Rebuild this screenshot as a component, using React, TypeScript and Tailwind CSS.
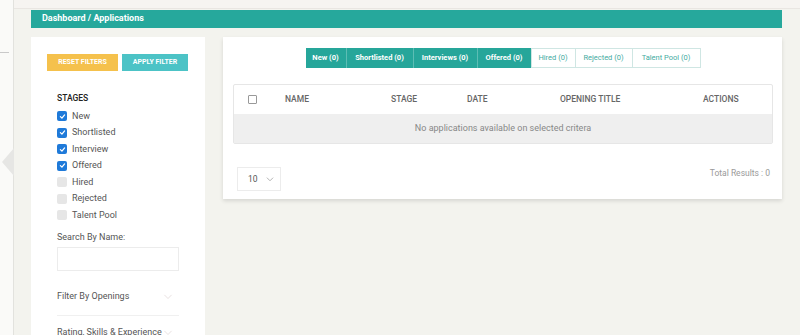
import React from 'react';

const stages = [
  { label: 'New', checked: true },
  { label: 'Shortlisted', checked: true },
  { label: 'Interview', checked: true },
  { label: 'Offered', checked: true },
  { label: 'Hired', checked: false },
  { label: 'Rejected', checked: false },
  { label: 'Talent Pool', checked: false },
];

const tabs = [
  { label: 'New (0)', active: true, w: 'w-[41px]' },
  { label: 'Shortlisted (0)', active: true, w: 'w-[67px]' },
  { label: 'Interviews (0)', active: true, w: 'w-[64px]' },
  { label: 'Offered (0)', active: true, w: 'w-[54px]' },
  { label: 'Hired (0)', active: false, w: 'w-[45px]' },
  { label: 'Rejected (0)', active: false, w: 'w-[58px]' },
  { label: 'Talent Pool (0)', active: false, w: 'w-[69px]' },
];

const Chevron = ({ className }: { className?: string }) => (
  <svg className={className} viewBox="0 0 12 8" fill="none" stroke="currentColor" strokeWidth={1.2}>
    <path d="M1.5 1.5 6 6l4.5-4.5" strokeLinecap="round" strokeLinejoin="round" />
  </svg>
);

const CheckBox = ({ checked }: { checked: boolean }) =>
  checked ? (
    <span className="flex h-[10px] w-[10px] items-center justify-center rounded-[2px] bg-[#1f7ad9]">
      <svg className="h-[7px] w-[7px]" viewBox="0 0 10 10" fill="none" stroke="white" strokeWidth={1.8}>
        <path d="M2 5.2 4.2 7.3 8 2.8" strokeLinecap="round" strokeLinejoin="round" />
      </svg>
    </span>
  ) : (
    <span className="h-[10px] w-[10px] rounded-[2px] bg-[#e6e6e6]" />
  );

const FilterPanel = () => (
  <div className="w-[174px] shrink-0 self-stretch bg-white pt-[17px]">
    <div className="flex gap-[4px] pl-4">
      <button className="h-[17px] w-[71px] bg-[#f5c14c] text-[7px] font-bold uppercase text-white">
        Reset Filters
      </button>
      <button className="h-[17px] w-[66px] bg-[#4cc3c6] text-[7px] font-bold uppercase text-white">
        Apply Filter
      </button>
    </div>

    <div className="pl-[26px] pr-[26px] pt-[21px]">
      <div className="text-[8.5px] font-medium leading-[12px] text-[#222]">STAGES</div>
      <div className="mt-[4px]">
        {stages.map((s) => (
          <label key={s.label} className="flex h-[16.5px] items-center gap-[5px]">
            <CheckBox checked={s.checked} />
            <span className="text-[9px] text-[#555]">{s.label}</span>
          </label>
        ))}
      </div>

      <div className="mt-[7px] text-[9px] leading-[12px] text-[#555]">Search By Name:</div>
      <input className="mt-[4px] h-[24px] w-[122px] border border-[#ececec] bg-white outline-none" />

      <div className="mt-[8px] flex h-[37px] items-center justify-between border-b border-[#f0f0f0] pr-[6px]">
        <span className="text-[9px] text-[#555]">Filter By Openings</span>
        <Chevron className="h-[6px] w-[10px] text-[#e6dede]" />
      </div>
      <div className="flex h-[34px] items-center justify-between pr-[6px]">
        <span className="text-[9px] text-[#555]">Rating, Skills &amp; Experience</span>
        <Chevron className="h-[6px] w-[10px] text-[#e6dede]" />
      </div>
    </div>
  </div>
);

const ApplicationsCard = () => (
  <div className="flex-1 bg-white px-[10px] pb-[8px] pr-[9px] pt-[11px] shadow-[0_2px_4px_rgba(0,0,0,0.12)]">
    <div className="flex justify-center">
      {tabs.map((t) =>
        t.active ? (
          <div
            key={t.label}
            className={`${t.w} flex h-[20px] items-center justify-center whitespace-nowrap border-r border-[#5dbdb4] bg-[#26a69a] text-[7.5px] font-bold text-white last:border-r-0`}
          >
            {t.label}
          </div>
        ) : (
          <div
            key={t.label}
            className={`${t.w} -ml-px flex h-[20px] items-center justify-center whitespace-nowrap border border-[#cfe6e3] bg-white text-[7.5px] text-[#45aba1]`}
          >
            {t.label}
          </div>
        )
      )}
    </div>

    <div className="mt-[16px] rounded-[2px] border border-[#e6e6e6]">
      <div className="grid h-[29px] grid-cols-[51px_106px_76px_93px_143px_1fr] items-center text-[8.5px] font-medium text-[#666]">
        <span className="pl-[14px]">
          <span className="block h-[9px] w-[9px] rounded-[1px] border border-[#999] bg-white" />
        </span>
        <span>NAME</span>
        <span>STAGE</span>
        <span>DATE</span>
        <span>OPENING TITLE</span>
        <span>ACTIONS</span>
      </div>
      <div className="flex h-[29px] items-center justify-center bg-[#efefef] text-[9px] text-[#888]">
        No applications available on selected critera
      </div>
    </div>

    <div className="mt-[23px] flex items-center justify-between pl-[4px] pr-[3px]">
      <div className="flex h-[24px] w-[44px] items-center justify-between border border-[#ececec] pl-[10px] pr-[6px] text-[8.5px] text-[#555]">
        <span>10</span>
        <Chevron className="h-[5px] w-[8px] text-[#999]" />
      </div>
      <span className="-mt-[12px] text-[8.5px] text-[#999]">Total Results : 0</span>
    </div>
  </div>
);

export default function App() {
  return (
    <div className="relative flex h-[335px] w-[800px] overflow-hidden bg-[#f3f3ee] font-['Roboto',sans-serif]">
      <div className="relative w-[14px] shrink-0 border-r border-[#e2e2de] bg-[#fafaf8]">
        <div className="mt-[52px] h-px w-[9px] bg-[#c9c9c9]" />
      </div>
      <div className="absolute left-[2px] top-[148px] h-0 w-0 border-y-[14px] border-r-[12px] border-y-transparent border-r-[#e6e6e4]" />

      <div className="flex min-h-0 flex-1 flex-col">
        <div className="h-[9px] shrink-0 border-b border-[#e9e6e2] bg-[#f6f4f1]" />
        <div className="flex min-h-0 flex-1 flex-col pl-[17px] pr-[18px] pt-[1px]">
          <div className="flex h-[18px] shrink-0 items-center bg-[#26a89c] pl-[11px] text-[9px] font-bold text-white">
            Dashboard / Applications
          </div>
          <div className="mt-[9px] flex flex-1 items-start gap-[18px]">
            <FilterPanel />
            <ApplicationsCard />
          </div>
        </div>
      </div>
    </div>
  );
}
